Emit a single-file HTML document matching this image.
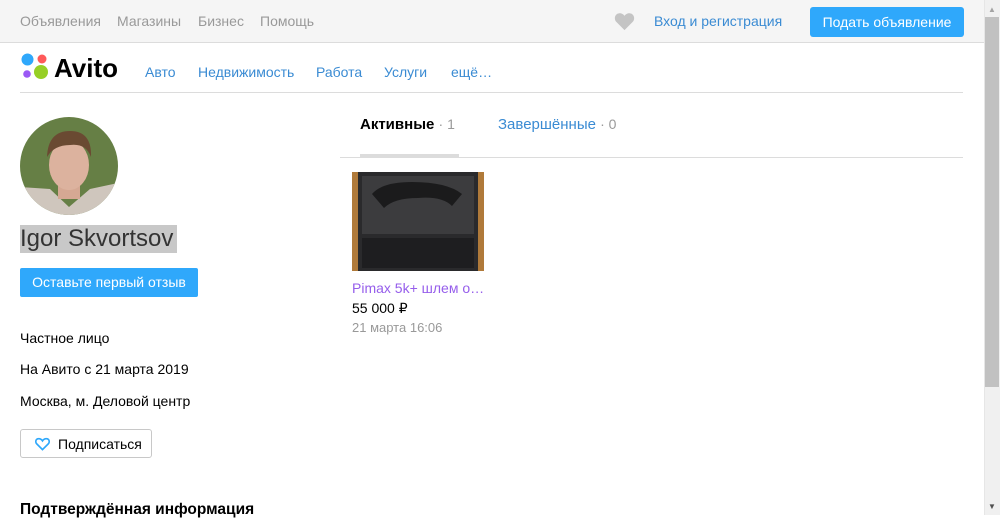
<!DOCTYPE html>
<html><head><meta charset="utf-8"><style>
*{margin:0;padding:0;box-sizing:border-box}
body{width:1000px;height:515px;overflow:hidden;font-family:"Liberation Sans",Arial,sans-serif;background:#fff;position:relative;color:#000}
.a{position:absolute;white-space:nowrap}
.top{position:absolute;left:0;top:0;width:984px;height:43px;background:#f5f5f5;border-bottom:1px solid #dcdcdc}
.tl{font-size:14px;color:#999;top:13px}
.nav{font-size:14px;color:#3a8bd3;top:64px}
.sb{position:absolute;left:984px;top:0;width:16px;height:515px;background:#f0f0f0;border-left:1px solid #e6e6e6}
.info{font-size:14px;color:#000;left:20px}
</style></head><body>
<div class="top"></div>
<div class="a tl" style="left:20px">Объявления</div>
<div class="a tl" style="left:117px">Магазины</div>
<div class="a tl" style="left:198px">Бизнес</div>
<div class="a tl" style="left:260px">Помощь</div>
<svg class="a" style="left:614px;top:12px" width="21" height="19" viewBox="0 0 24 22"><path d="M12 21 L2.5 11.5 C-0.5 8.5 0.5 2 6 1.5 C9 1.3 11 3 12 4.5 C13 3 15 1.3 18 1.5 C23.5 2 24.5 8.5 21.5 11.5 Z" fill="#c4c4c4"/></svg>
<div class="a" style="left:654px;top:13px;font-size:14px;color:#3a8bd3">Вход и регистрация</div>
<div class="a" style="left:810px;top:7px;width:154px;height:30px;background:#2fa8fb;border-radius:3px;color:#fff;font-size:14px;text-align:center;line-height:30px">Подать объявление</div>

<svg class="a" style="left:20px;top:52px" width="30" height="30" viewBox="0 0 30 30"><circle cx="7.5" cy="7.5" r="6" fill="#2fa8fb"/><circle cx="22" cy="7" r="4.5" fill="#ff5a5a"/><circle cx="7" cy="22" r="3.8" fill="#9b59f5"/><circle cx="21" cy="20" r="7" fill="#97cf26"/></svg>
<div class="a" style="left:54px;top:53px;font-size:26px;font-weight:bold;letter-spacing:0px;color:#000">Avito</div>
<div class="a nav" style="left:145px">Авто</div>
<div class="a nav" style="left:198px">Недвижимость</div>
<div class="a nav" style="left:316px">Работа</div>
<div class="a nav" style="left:384px">Услуги</div>
<div class="a nav" style="left:451px">ещё…</div>
<div class="a" style="left:20px;top:92px;width:943px;height:1px;background:#dcdcdc"></div>

<svg class="a" style="left:20px;top:117px" width="98" height="98" viewBox="0 0 98 98"><defs><clipPath id="c"><circle cx="49" cy="49" r="49"/></clipPath></defs><g clip-path="url(#c)"><rect width="98" height="98" fill="#667f45"/><path d="M0 70 L30 72 L49 90 L70 72 L98 66 L98 98 L0 98Z" fill="#cfc6bd"/><rect x="38" y="62" width="22" height="20" fill="#d5a893"/><ellipse cx="49" cy="48" rx="20" ry="25" fill="#dcb29e"/><path d="M27 40 Q28 14 50 14 Q72 14 71 40 Q66 26 50 28 Q34 28 27 40Z" fill="#6a4a32"/></g></svg>
<div class="a" style="left:20px;top:225px;height:28px;width:157px;background:#c8c8c8;font-size:24px;color:#333;line-height:28px">Igor Skvortsov</div>
<div class="a" style="left:20px;top:268px;width:178px;height:29px;background:#2fa8fb;border-radius:2px;color:#fff;font-size:14px;text-align:center;line-height:29px">Оставьте первый отзыв</div>
<div class="a info" style="top:330px">Частное лицо</div>
<div class="a info" style="top:361px">На Авито с 21 марта 2019</div>
<div class="a info" style="top:393px">Москва, м. Деловой центр</div>
<div class="a" style="left:20px;top:429px;width:132px;height:29px;border:1px solid #c8c8c8;border-radius:3px"></div>
<svg class="a" style="left:35px;top:437px" width="15" height="14" viewBox="0 0 24 22"><path d="M12 20 L3 11 C0 8 1 2.5 6 2.5 C9 2.5 11 4.5 12 6 C13 4.5 15 2.5 18 2.5 C23 2.5 24 8 21 11 Z" fill="none" stroke="#2fa8fb" stroke-width="2.6"/></svg>
<div class="a" style="left:58px;top:436px;font-size:14px;color:#000">Подписаться</div>
<div class="a" style="left:20px;top:501px;font-size:15.5px;font-weight:bold">Подтверждённая информация</div>

<div class="a" style="left:360px;top:116px;font-size:15px;font-weight:bold">Активные <span style="font-weight:normal;color:#999;font-size:14px">· 1</span></div>
<div class="a" style="left:498px;top:116px;font-size:15px;color:#3a8bd3">Завершённые <span style="color:#999;font-size:14px">· 0</span></div>
<div class="a" style="left:340px;top:157px;width:623px;height:1px;background:#dcdcdc"></div>
<div class="a" style="left:360px;top:154px;width:99px;height:3px;background:#dcdcdc"></div>

<div class="a" style="left:352px;top:172px;width:132px;height:99px;background:#b07a3a"></div>
<div class="a" style="left:358px;top:172px;width:120px;height:99px;background:#2a2a2c"></div>
<div class="a" style="left:362px;top:176px;width:112px;height:58px;background:#3c3c3e"></div>
<svg class="a" style="left:362px;top:176px" width="112" height="58" viewBox="0 0 112 58"><path d="M10 18 Q20 6 50 6 Q85 6 100 18 L90 30 Q80 20 56 22 Q32 22 22 32 Z" fill="#1b1b1c"/></svg>
<div class="a" style="left:362px;top:238px;width:112px;height:30px;background:#1e1e20"></div>
<div class="a" style="left:352px;top:280px;font-size:14px;color:#965eeb">Pimax 5k+ шлем о…</div>
<div class="a" style="left:352px;top:300px;font-size:14px;color:#000">55 000 ₽</div>
<div class="a" style="left:352px;top:320px;font-size:13px;color:#999">21 марта 16:06</div>

<div class="sb"></div>
<div class="a" style="left:985px;top:17px;width:14px;height:370px;background:#c1c1c1"></div>
<div class="a" style="left:988px;top:5px;font-size:8px;color:#a3a3a3">▲</div>
<div class="a" style="left:988px;top:502px;font-size:8px;color:#505050">▼</div>
</body></html>
